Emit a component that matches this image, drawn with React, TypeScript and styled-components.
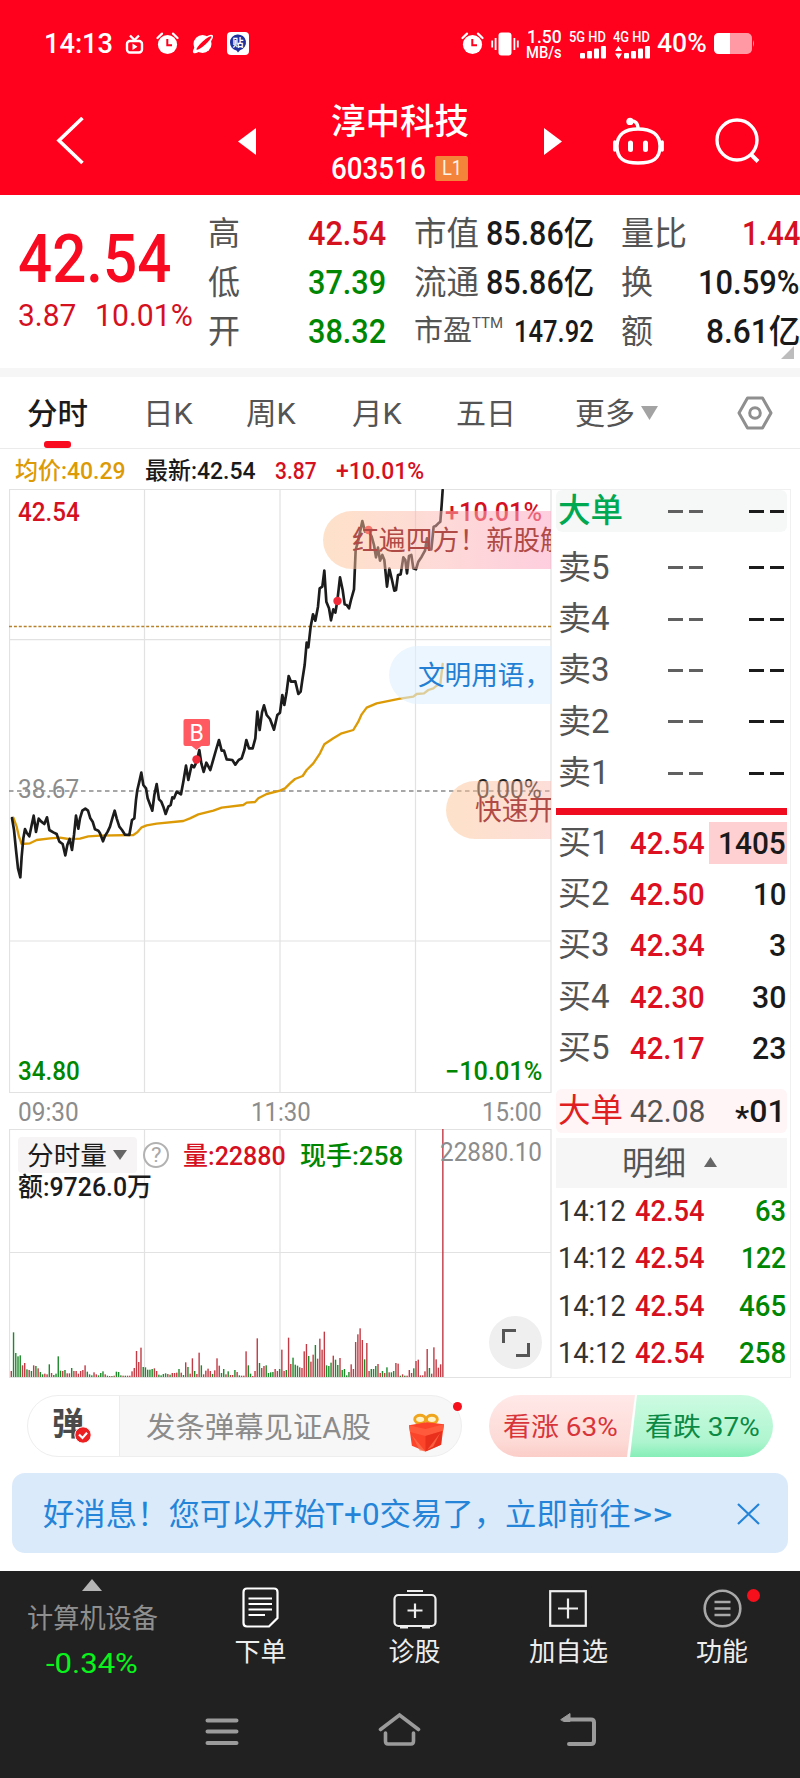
import React, { useLayoutEffect, useRef } from 'react';
import styled, { createGlobalStyle } from 'styled-components';

const GlobalStyle = createGlobalStyle`
  * { box-sizing: border-box; }
  body {
    margin: 0;
    background: #fff;
    font-family: Roboto, "Noto Sans CJK SC", sans-serif;
    color: #1a1a1a;
  }
  svg { display: block; }
`;

const RED = '#d5101f';
const GREEN = '#008600';
const DARK = '#1b1b1b';
const GREY = '#545454';
const MUTED = '#8c8c8c';

/* ---------- text fitted to a column width ---------- */

const TextBox = styled.span<{ $w: number; $size: number; $color?: string; $weight?: number }>`
  display: flex;
  flex: none;
  width: ${p => p.$w}px;
  height: ${p => Math.round(p.$size * 1.2)}px;
  line-height: ${p => Math.round(p.$size * 1.2)}px;
  font-size: ${p => p.$size}px;
  font-weight: ${p => p.$weight ?? 400};
  color: ${p => p.$color ?? 'inherit'};
`;

const TextInner = styled.span`
  flex: none;
  white-space: pre;
  transform-origin: 0 50%;
`;

type FitProps = { w: number; size: number; color?: string; weight?: number; children: React.ReactNode };

function Fit({ w, size, color, weight, children }: FitProps) {
  const ref = useRef<HTMLSpanElement>(null);
  useLayoutEffect(() => {
    const node = ref.current;
    if (node && node.offsetWidth) node.style.transform = `scaleX(${w / node.offsetWidth})`;
  }, [w, size, children]);
  return (
    <TextBox $w={w} $size={size} $color={color} $weight={weight}>
      <TextInner ref={ref}>{children}</TextInner>
    </TextBox>
  );
}

/* ---------- header ---------- */

const Phone = styled.div`
  width: 800px;
  height: 1778px;
  overflow: hidden;
  display: flex;
  flex-direction: column;
  background: #fff;
`;

const Header = styled.header`
  height: 195px;
  flex: none;
  background: #ff001d;
  color: #fff;
`;

const StatusBar = styled.div`
  height: 87px;
  padding: 0 45px 0 44px;
  display: flex;
  align-items: center;
  justify-content: space-between;
`;

const StatusGroup = styled.div<{ $gap: number }>`
  display: flex;
  align-items: center;
  gap: ${p => p.$gap}px;
`;

const Stack = styled.div<{ $gap?: number; $align?: string }>`
  display: flex;
  flex-direction: column;
  align-items: ${p => p.$align ?? 'flex-start'};
  gap: ${p => p.$gap ?? 0}px;
`;

const SpeedUnit = styled.div`
  margin-top: -5px;
`;

const NavBar = styled.div`
  height: 108px;
  display: grid;
  grid-template-columns: 56px 182px 81px 161px 63px 69px 103px 85px;
  align-items: center;
`;

const Title = styled.div`
  display: flex;
  flex-direction: column;
  align-items: center;
  padding: 7px 0 0;
  gap: 6px;
`;

const CodeRow = styled.div`
  display: flex;
  align-items: center;
  gap: 9px;
`;

const Level = styled.span`
  width: 33px;
  height: 25px;
  border-radius: 2px;
  background: #f4843a;
  display: flex;
  align-items: center;
  justify-content: center;
`;

/* ---------- quote ---------- */

const Quote = styled.section`
  height: 173px;
  flex: none;
  display: flex;
  padding-left: 18px;
  position: relative;
`;

const PriceBlock = styled.div`
  width: 190px;
  padding-top: 25px;
`;

const BigPrice = styled.div`
  height: 78px;
  display: flex;
  align-items: center;
`;

const ChangeRow = styled.div`
  display: flex;
  gap: 19px;
  height: 34px;
  align-items: center;
`;

const Column = styled.div<{ $w: number; $ml?: number }>`
  width: ${p => p.$w}px;
  margin-left: ${p => p.$ml ?? 0}px;
  padding-top: 14px;
  flex: none;
`;

const Pair = styled.div`
  height: 49px;
  display: flex;
  align-items: center;
  justify-content: space-between;
`;

const Label = styled.span`
  display: flex;
`;

const Corner = styled.svg`
  position: absolute;
  right: 6px;
  bottom: 9px;
`;

const Divider = styled.div`
  height: 9px;
  flex: none;
  background: #f6f6f6;
`;

/* ---------- tabs ---------- */

const Tabs = styled.nav`
  height: 72px;
  flex: none;
  display: grid;
  grid-template-columns: 27px 116px 103px 106px 104px 119px 66px 96px 63px;
  align-items: center;
  padding-top: 2px;
  border-bottom: 1px solid #ebebeb;
  position: relative;
`;

const Indicator = styled.i`
  position: absolute;
  left: 44px;
  bottom: 0;
  width: 27px;
  height: 7px;
  border-radius: 3px;
  background: #f90a1f;
`;

const Summary = styled.div`
  height: 40px;
  flex: none;
  display: flex;
  align-items: center;
  gap: 19px;
  padding: 5px 0 0 15px;
`;

/* ---------- charts ---------- */

const Main = styled.main`
  height: 889px;
  flex: none;
  display: flex;
  padding-left: 9px;
`;

const Charts = styled.div`
  width: 543px;
  flex: none;
`;

const Pane = styled.div<{ $h: number }>`
  position: relative;
  height: ${p => p.$h}px;
  overflow: hidden;
`;

const Tag = styled.div<{ $y: number; $left?: number; $right?: number }>`
  position: absolute;
  top: ${p => p.$y}px;
  transform: translateY(-50%);
  ${p => (p.$left !== undefined ? `left: ${p.$left}px;` : '')}
  ${p => (p.$right !== undefined ? `right: ${p.$right}px;` : '')}
`;

const Bullet = styled.div<{ $x: number; $y: number; $bg: string; $pad: number }>`
  position: absolute;
  left: ${p => p.$x}px;
  right: 1px;
  top: ${p => p.$y}px;
  height: 58px;
  padding: 2px 0 0 ${p => p.$pad}px;
  border-radius: 29px 0 0 29px;
  background: ${p => p.$bg};
  display: flex;
  align-items: center;
  overflow: hidden;
`;

const TimeAxis = styled.div`
  height: 36px;
  display: flex;
  align-items: center;
  justify-content: space-between;
  padding: 2px 10px 0 9px;
`;

const VolumeHead = styled.div`
  position: absolute;
  left: 9px;
  top: 8px;
  display: flex;
  align-items: center;
`;

const HeadTexts = styled.div`
  display: flex;
  gap: 14px;
  padding-top: 2px;
`;

const Chip = styled.div`
  width: 119px;
  height: 36px;
  padding: 2px 10px 0 9px;
  border-radius: 4px;
  background: #f6f4f5;
  display: flex;
  align-items: center;
  justify-content: space-between;
  margin-right: 6px;
`;

const Help = styled.div`
  width: 26px;
  height: 26px;
  border: 2px solid #b2b2b2;
  border-radius: 50%;
  display: flex;
  align-items: center;
  justify-content: center;
  margin-right: 14px;
`;

const Expand = styled.div`
  position: absolute;
  left: 480px;
  bottom: 9px;
  width: 53px;
  height: 53px;
  border-radius: 50%;
  background: #efefef;
  display: flex;
  align-items: center;
  justify-content: center;
`;

/* ---------- order book ---------- */

const Book = styled.aside`
  width: 239px;
  flex: none;
  padding: 0 3px 0 4px;
  border: 1px solid #f0f0f0;
  border-left: 0;
`;

const BookRow = styled.div<{ $h: number; $bg?: string }>`
  height: ${p => p.$h}px;
  padding: 0 2px;
  border-radius: 6px;
  background: ${p => p.$bg ?? 'transparent'};
  display: grid;
  grid-template-columns: 72px 78px 1fr;
  align-items: center;
`;

const Right = styled.div<{ $bg?: string }>`
  display: flex;
  justify-content: flex-end;
  align-items: center;
  height: 42px;
  margin: 0 -2px 0 1px;
  padding-right: 1px;
  background: ${p => p.$bg ?? 'transparent'};
`;

const Dash = styled.span<{ $c: string; $ml?: number; $mr?: number }>`
  display: flex;
  gap: 6px;
  margin-left: ${p => p.$ml ?? 0}px;
  margin-right: ${p => p.$mr ?? 0}px;
  &::before, &::after {
    content: '';
    width: 14.5px;
    height: 3px;
    background: ${p => p.$c};
  }
`;

const Star = styled.span`
  position: relative;
  top: 6px;
`;

const Spread = styled.div`
  height: 7px;
  margin: 9px 0 2px;
  background: #f00c20;
`;

const Spacer = styled.div<{ $h: number }>`
  height: ${p => p.$h}px;
`;

const DetailBar = styled.div`
  height: 50px;
  margin: 5px 0 -1px;
  background: #f6f6f6;
  display: flex;
  align-items: center;
  justify-content: center;
  gap: 18px;
  padding: 3px 4px 0 0;
`;

const TickRow = styled.div`
  height: 47.5px;
  padding: 0 2px;
  display: grid;
  grid-template-columns: 77px 72px 1fr;
  align-items: center;
`;

/* ---------- lower area ---------- */

const Actions = styled.div`
  height: 62px;
  margin: 17px 0 16px 27px;
  flex: none;
  display: flex;
  gap: 27px;
`;

const Composer = styled.div`
  width: 435px;
  height: 62px;
  border: 1px solid #eee;
  border-radius: 31px;
  background: linear-gradient(90deg, #fff 91px, #ececec 91px, #ececec 92px, #f7f7f7 92px);
  display: flex;
  align-items: center;
  position: relative;
`;

const DanmakuIcon = styled.div`
  width: 118px;
  padding: 0 0 5px 24px;
  position: relative;
`;

const Placeholder = styled.div`
  padding-top: 4px;
`;

const Check = styled.svg`
  position: absolute;
  left: 46px;
  top: 21px;
`;

const GiftSlot = styled.div`
  margin-left: 37px;
  padding-top: 13px;
`;

const RedDot = styled.i<{ $x: number; $y: number; $d: number }>`
  position: absolute;
  left: ${p => p.$x}px;
  top: ${p => p.$y}px;
  width: ${p => p.$d}px;
  height: ${p => p.$d}px;
  border-radius: 50%;
  background: #f5101c;
`;

const Vote = styled.div`
  display: flex;
  width: 284px;
  height: 62px;
  border-radius: 31px;
  overflow: hidden;
`;

const Side = styled.div<{ $w: number; $bg: string; $pad: number; $clip: string; $ml?: number }>`
  width: ${p => p.$w}px;
  margin-left: ${p => p.$ml ?? 0}px;
  background: ${p => p.$bg};
  clip-path: ${p => p.$clip};
  padding: 2px 0 0 ${p => p.$pad}px;
  display: flex;
  align-items: center;
  flex: none;
`;

const Banner = styled.div`
  height: 80px;
  flex: none;
  margin: 0 12px 18px;
  padding: 3px 28px 0 31px;
  border-radius: 13px;
  background: #dbeafb;
  display: flex;
  align-items: center;
  justify-content: space-between;
`;

const BannerText = styled.div`
  display: flex;
  gap: 1px;
`;

const Footer = styled.footer`
  flex: 1;
  background: #212121;
`;

const Menu = styled.div`
  height: 117px;
  display: grid;
  grid-template-columns: 184px 153px 155px 152px 156px;
`;

const MenuItem = styled.div<{ $pad: number; $gap: number }>`
  display: flex;
  flex-direction: column;
  align-items: center;
  padding-top: ${p => p.$pad}px;
  gap: ${p => p.$gap}px;
  position: relative;
`;

const SystemBar = styled.div`
  height: 90px;
  padding: 24px 204px 0 205px;
  display: flex;
  justify-content: space-between;
  align-items: flex-start;
`;

/* ---------- data ---------- */

const PRICE =
  '36,1014 42,1050 48,1110 54,1165 61,1192 65,1130 70,1075 75,1047 80,1058 88,1069 94,1040 101,1007 108,1056 116,1016 124,1025 133,1032 141,1012 148,1050 160,1057 170,1062 178,1085 188,1092 196,1126 202,1095 209,1077 216,1110 222,1065 228,1007 235,1046 240,1015 247,992 256,986 264,992 271,1015 278,1025 285,1048 295,1052 300,1060 309,1084 315,1068 323,1055 330,1040 337,1015 344,992 350,1015 358,1040 366,1050 375,1064 388,1065 396,1020 403,1015 408,960 412,930 418,905 424,878 430,915 438,925 443,955 457,992 463,945 470,912 477,958 484,965 490,980 497,1002 505,980 512,975 517,952 522,955 530,935 543,943 550,905 558,857 565,900 575,855 582,862 590,845 598,810 604,850 611,876 619,848 631,870 640,838 648,810 657,780 665,812 672,812 680,838 697,840 706,854 716,840 725,835 733,810 739,780 747,805 758,805 766,775 772,695 779,750 786,697 792,676 800,705 810,717 822,749 832,705 840,698 847,645 853,675 860,635 866,588 873,605 886,604 895,642 902,635 907,600 914,555 920,488 925,502 932,440 939,403 946,422 954,380 959,325 967,320 973,272 979,365 987,385 993,421 1000,388 1006,398 1012,363 1020,292 1028,330 1034,373 1040,375 1047,385 1053,360 1062,328 1067,210 1074,185 1087,123 1095,155 1105,150 1115,170 1122,195 1128,232 1134,203 1140,242 1147,225 1153,240 1161,320 1168,266 1176,300 1183,332 1188,330 1194,285 1202,283 1210,232 1216,240 1221,280 1227,228 1234,225 1240,265 1248,268 1255,245 1265,230 1275,212 1281,175 1287,208 1294,208 1301,140 1307,138 1315,130 1321,125 1325,75 1328,30';

const AVERAGE =
  '40,1013 50,1040 57,1070 65,1092 90,1090 110,1080 150,1075 180,1073 205,1077 240,1076 265,1069 300,1067 400,1065 412,1057 425,1042 440,1036 470,1031 550,1023 570,1015 595,1003 640,992 665,983 730,975 740,968 765,966 775,955 800,942 840,932 855,925 870,910 885,897 908,888 920,870 940,850 960,820 973,793 1000,775 1025,760 1060,750 1075,725 1085,703 1100,683 1130,670 1200,656 1240,650 1250,642 1272,640 1285,630 1300,625 1310,617 1321,612 1328,552';

const VOLUME =
  '18r 134g 72g 62g 65g 35r 42r 23g 21r 18g 35r 33g 26r 15g 8g 10r 8r 38g 12r 6g 10g 62g 19g 18r 21g 11r 11r 27g 18r 18r 10r 18r 21r 35r 16g 8g 5g 14r 8r 5g 12g 17g 8r 4g 3r 3g 4r 16g 15g 5g 4r 4g 4r 4r 17r 27r 78r 45r 88r 30g 29g 22g 22g 24g 26r 18r 7g 5g 9g 11g 9r 7g 12r 12r 13r 24g 13r 6g 44r 30g 10r 56r 18g 9r 73r 35g 8r 19r 25r 18r 9g 20r 56r 34r 12g 24g 8r 17g 6r 6r 21g 15r 5g 4r 4r 77r 35g 10g 3r 18r 116r 42g 27r 33r 35g 12g 14g 15g 24r 18r 24g 82r 18r 21g 118r 39r 58g 37g 34g 29r 27r 77r 99r 63g 46r 67r 96g 55r 115r 82r 136r 35g 33g 43g 64r 52g 36g 57r 21g 24g 5g 15g 38r 24r 105r 128r 146r 111r 53g 102r 18r 24g 24g 33g 39r 12r 18g 12r 29g 14r 14g 18g 42r 40r 4g 8r 4g 4r 21r 12r 26g 48r 52r 5r 5r 17r 84r 27g 10r 89r 53r 28r 38r 747r'
    .split(' ')
    .map(s => ({ h: parseInt(s, 10) / 3, up: s.endsWith('r') }));

const SELLS = ['卖5', '卖4', '卖3', '卖2', '卖1'];
const BUYS: [string, string, string, number][] = [
  ['买1', '42.54', '1405', 68],
  ['买2', '42.50', '10', 33],
  ['买3', '42.34', '3', 17],
  ['买4', '42.30', '30', 34],
  ['买5', '42.17', '23', 34],
];
const TICKS: [string, number][] = [['63', 31], ['122', 45], ['465', 47], ['258', 47]];

/* ---------- icons ---------- */

const AlarmIcon = () => (
  <svg width="23" height="23" viewBox="0 0 23 23" fill="none">
    <circle cx="11.5" cy="12.5" r="9.6" fill="#fff" />
    <path d="M1.5 6 L6 1.6 M21.5 6 L17 1.6" stroke="#fff" strokeWidth="2.2" strokeLinecap="round" />
    <path d="M11.3 7 V13.2 H16" stroke="#ff001d" strokeWidth="2" />
  </svg>
);

const Signal = ({ arrows }: { arrows?: boolean }) => (
  <svg width={arrows ? 35 : 27} height="13" viewBox={arrows ? '0 0 35 13' : '8 0 27 13'} fill="#fff">
    {arrows && <path d="M3.5 0 L7 5 H0 Z M3.5 13 L7 7.6 H0 Z" />}
    <rect x="9" y="7" width="5" height="5.5" rx="1" />
    <rect x="16" y="5" width="5" height="7.5" rx="1" />
    <rect x="23" y="2.5" width="5" height="10" rx="1" />
    <rect x="30" y="0" width="5" height="12.5" rx="1" />
  </svg>
);

function StatusIcons() {
  return (
    <StatusBar>
      <StatusGroup $gap={12}>
        <Fit w={69} size={28} weight={500}>14:13</Fit>
        <svg width="19" height="20" viewBox="0 0 19 20" fill="none" stroke="#fff" strokeWidth="2.4">
          <rect x="2" y="7" width="15" height="11.5" rx="3" />
          <path d="M5 1.5 L9.5 6 L14 1.5" />
          <path d="M7.5 9.5 L12.5 12.8 L7.5 16 Z" fill="#fff" stroke="none" />
        </svg>
        <AlarmIcon />
        <svg width="24" height="22" viewBox="0 0 24 22" fill="none">
          <circle cx="11.5" cy="11" r="9" fill="#fff" />
          <ellipse cx="12" cy="11" rx="13" ry="4.2" transform="rotate(-42 12 11)" fill="#fff" />
          <ellipse cx="13" cy="10" rx="10" ry="2" transform="rotate(-42 13 10)" fill="#ff001d" />
        </svg>
        <svg width="22" height="23" viewBox="0 0 22 23">
          <rect width="22" height="23" rx="4" fill="#fff" />
          <path d="M3 10.5 A8 8 0 1 1 13 18.2 L11 20.5 L9.5 18.5 A8 8 0 0 1 3 10.5" fill="#20309c" />
          <text x="11" y="14.7" fontSize="11" fontWeight="700" fill="#fff" textAnchor="middle" fontFamily="Noto Sans CJK SC, sans-serif">贴</text>
        </svg>
      </StatusGroup>
      <StatusGroup $gap={7}>
        <AlarmIcon />
        <svg width="28" height="24" viewBox="0 0 28 24" fill="none" stroke="#fff" strokeWidth="1.8">
          <rect x="7.5" y="0.5" width="13" height="23" rx="3" fill="#fff" stroke="none" />
          <path d="M4.6 6 V18 M1.2 8.5 V15.5 M23.4 6 V18 M26.8 8.5 V15.5" />
        </svg>
        <Stack $align="center">
          <Fit w={35} size={18} weight={500}>1.50</Fit>
          <SpeedUnit><Fit w={36} size={16} weight={500}>MB/s</Fit></SpeedUnit>
        </Stack>
        <Stack $align="flex-end" $gap={0}>
          <Fit w={37} size={15} weight={500}>5G HD</Fit>
          <Signal />
        </Stack>
        <Stack $align="flex-end" $gap={0}>
          <Fit w={37} size={15} weight={500}>4G HD</Fit>
          <Signal arrows />
        </Stack>
        <Fit w={50} size={26} weight={500}>40%</Fit>
        <svg width="41" height="21" viewBox="0 0 41 21">
          <rect width="38" height="21" rx="5" fill="#ff9aa4" />
          <path d="M5 0 H16 V21 H5 Q0 21 0 16 V5 Q0 0 5 0" fill="#fff" />
          <path d="M39 7 Q41 10.5 39 14 Z" fill="#ff9aa4" />
        </svg>
      </StatusGroup>
    </StatusBar>
  );
}

function TopNav() {
  return (
    <NavBar>
      <span />
      <svg width="28" height="49" viewBox="0 1 28 49" fill="none" stroke="#fff" strokeWidth="3.6">
        <path d="M26.5 2 L3 24.5 L26.5 47" />
      </svg>
      <svg width="18" height="28" viewBox="0 0 18 28"><path d="M18 1 V28 L0 14.5 Z" fill="#fff" /></svg>
      <Title>
        <Fit w={138} size={35} weight={500}>淳中科技</Fit>
        <CodeRow>
          <Fit w={95} size={31} weight={500}>603516</Fit>
          <Level><Fit w={20} size={21} color="#fff3e8">L1</Fit></Level>
        </CodeRow>
      </Title>
      <svg width="82" height="28" viewBox="0 0 82 28"><path d="M64 1 V28 L82 14.5 Z" fill="#fff" /></svg>
      <span />
      <svg width="54" height="50" viewBox="0 0 54 50" fill="none" stroke="#fff" strokeWidth="3.4">
        <path d="M26 13 C39 13 48 18 48 30 C48 43 41 47 26 47 C12 47 5 43 5 30 C5 18 13 13 26 13 Z" />
        <path d="M18 5 Q26 4 26 13" />
        <circle cx="18" cy="5.4" r="2" fill="#fff" />
        <path d="M2.8 26 V34 M50.2 26 V34" strokeLinecap="round" />
        <path d="M18.5 27 V33.5 M33.5 27 V33.5" strokeWidth="5" strokeLinecap="round" />
      </svg>
      <svg width="46" height="46" viewBox="0 0 46 46" fill="none" stroke="#fff" strokeWidth="3.4">
        <circle cx="22" cy="22" r="20" />
        <path d="M35.5 36 L43 43.5" strokeWidth="4" />
      </svg>
    </NavBar>
  );
}

function QuotePanel() {
  return (
    <Quote>
      <PriceBlock>
        <BigPrice><Fit w={153} size={66} weight={500} color="#f80b20">42.54</Fit></BigPrice>
        <ChangeRow>
          <Fit w={58} size={32} color={RED}>3.87</Fit>
          <Fit w={98} size={32} color={RED}>10.01%</Fit>
        </ChangeRow>
      </PriceBlock>
      <Column $w={178}>
        {([['高', '42.54', RED], ['低', '37.39', GREEN], ['开', '38.32', GREEN]] as const).map(([k, v, c]) => (
          <Pair key={k}><Fit w={32} size={33} color={GREY}>{k}</Fit><Fit w={78} size={33} weight={500} color={c}>{v}</Fit></Pair>
        ))}
      </Column>
      <Column $w={180} $ml={28}>
        {['市值', '流通'].map(k => (
          <Pair key={k}><Fit w={65} size={33} color={GREY}>{k}</Fit><Fit w={108} size={33} weight={500}>85.86亿</Fit></Pair>
        ))}
        <Pair>
          <Label>
            <Fit w={58} size={29} color={GREY}>市盈</Fit>
            <Fit w={31} size={15} color={GREY}>TTM</Fit>
          </Label>
          <Fit w={80} size={31} weight={500}>147.92</Fit>
        </Pair>
      </Column>
      <Column $w={179} $ml={27}>
        <Pair><Fit w={66} size={33} color={GREY}>量比</Fit><Fit w={58} size={33} weight={500} color={RED}>1.44</Fit></Pair>
        <Pair><Fit w={32} size={33} color={GREY}>换</Fit><Fit w={102} size={33} weight={500}>10.59%</Fit></Pair>
        <Pair><Fit w={32} size={33} color={GREY}>额</Fit><Fit w={94} size={33} weight={500}>8.61亿</Fit></Pair>
      </Column>
      <Corner width="13" height="13" viewBox="0 0 13 13"><path d="M13 0 V13 H0 Z" fill="#bdbdbd" /></Corner>
    </Quote>
  );
}

function TabBar() {
  return (
    <Tabs>
      <span />
      <Fit w={61} size={30} weight={500} color={DARK}>分时</Fit>
      <Fit w={50} size={30} color={GREY}>日K</Fit>
      <Fit w={50} size={30} color={GREY}>周K</Fit>
      <Fit w={50} size={30} color={GREY}>月K</Fit>
      <Fit w={60} size={30} color={GREY}>五日</Fit>
      <Fit w={60} size={30} color={GREY}>更多</Fit>
      <svg width="17" height="16" viewBox="0 0 17 16"><path d="M0 0 H17 L8.5 14 Z" fill="#a3a3a3" /></svg>
      <svg width="36" height="36" viewBox="0 0 36 36" fill="none" stroke="#8f8f8f" strokeWidth="3" strokeLinejoin="round">
        <path d="M10.5 2 H25.5 L34 17 L25.5 32 H10.5 L2 17 Z" />
        <circle cx="18" cy="17" r="5.3" />
      </svg>
      <Indicator />
    </Tabs>
  );
}

function PricePane() {
  return (
    <Pane $h={604}>
      <svg width="543" height="604" viewBox="9 489 543 604" fill="none">
        <path d="M9.5 489.5 H551 V1092.5 H9.5 Z M144.5 489 V1092 M280 489 V1092 M415.5 489 V1092 M9 639.7 H551 M9 941 H551" stroke="#e2e2e2" strokeWidth="1.2" />
        <path d="M9 626.5 H551" stroke="#b8822c" strokeWidth="1.4" strokeDasharray="3 1.9" />
        <path d="M9 791 H551" stroke="#8a8a8a" strokeWidth="1.4" strokeDasharray="4.5 3.5" />
        <g transform="translate(0 480) scale(0.33333)" strokeLinejoin="round" strokeLinecap="round">
          <polyline points={AVERAGE} stroke="#dc9a06" strokeWidth="7" />
          <polyline points={PRICE} stroke="#1c1c1c" strokeWidth="8" />
        </g>
        <rect x="183.5" y="719" width="26.5" height="27" rx="2" fill="#ff5a62" />
        <path d="M191 745.5 H202 L196.5 750 Z" fill="#ff5a62" />
        <circle cx="196.5" cy="759.5" r="4.2" fill="#f02a38" />
        <circle cx="337.5" cy="601" r="4.2" fill="#f02a38" />
        <circle cx="368.5" cy="530" r="4.2" fill="#f02a38" />
        <text x="196.7" y="740.5" fill="#fff" fontSize="23" textAnchor="middle" fontFamily="Roboto, sans-serif">B</text>
      </svg>
      <Tag $y={24} $left={9}><Fit w={62} size={25} weight={500} color={RED}>42.54</Fit></Tag>
      <Tag $y={24} $right={10}><Fit w={97} size={25} weight={500} color={RED}>+10.01%</Fit></Tag>
      <Tag $y={300} $left={9}><Fit w={61} size={26} color={MUTED}>38.67</Fit></Tag>
      <Tag $y={300} $right={10}><Fit w={66} size={26} color="#222">0.00%</Fit></Tag>
      <Tag $y={583} $left={9}><Fit w={62} size={25} weight={500} color={GREEN}>34.80</Fit></Tag>
      <Tag $y={583} $right={10}><Fit w={97} size={25} weight={500} color={GREEN}>−10.01%</Fit></Tag>
      <Bullet $x={314} $y={22} $pad={29} $bg="linear-gradient(90deg, rgba(253,196,148,.5), rgba(252,182,176,.5) 50%, rgba(253,166,196,.55))">
        <Fit w={215} size={27} color="#b04a46">红遍四方！新股解</Fit>
      </Bullet>
      <Bullet $x={380} $y={157} $pad={29} $bg="rgba(222,240,253,.6)">
        <Fit w={133} size={27} color="#237fd3">文明用语，</Fit>
      </Bullet>
      <Bullet $x={437} $y={292} $pad={29} $bg="linear-gradient(90deg, rgba(253,196,148,.5), rgba(252,182,170,.45))">
        <Fit w={80} size={27} color="#b04a46">快速开</Fit>
      </Bullet>
    </Pane>
  );
}

function VolumePane() {
  return (
    <Pane $h={249}>
      <svg width="543" height="249" viewBox="9 1129 543 249" fill="none">
        <path d="M9.5 1129.5 H551 V1377.5 H9.5 Z M144.5 1129 V1377 M280 1129 V1377 M415.5 1129 V1377 M9 1252.5 H551" stroke="#e2e2e2" strokeWidth="1.2" />
        {VOLUME.map((b, i) => (
          <rect key={i} x={10.6 + i * 2.236} y={1377 - b.h} width="1.4" height={b.h} fill={b.up ? '#c23a44' : '#1d8a2a'} />
        ))}
      </svg>
      <VolumeHead>
        <Chip>
          <Fit w={80} size={26} color={DARK}>分时量</Fit>
          <svg width="14" height="12" viewBox="0 0 14 12"><path d="M0 0 H14 L7 10 Z" fill="#666" /></svg>
        </Chip>
        <Help><Fit w={10} size={20} color="#a8a8a8">?</Fit></Help>
        <HeadTexts>
          <Fit w={103} size={26} weight={500} color={RED}>量:22880</Fit>
          <Fit w={103} size={26} weight={500} color={GREEN}>现手:258</Fit>
        </HeadTexts>
      </VolumeHead>
      <Tag $y={58} $left={9}><Fit w={134} size={26} weight={500} color={DARK}>额:9726.0万</Fit></Tag>
      <Tag $y={24} $right={10}><Fit w={102} size={25} color={MUTED}>22880.10</Fit></Tag>
      <Expand>
        <svg width="28" height="28" viewBox="0 0 28 28" fill="none" stroke="#555" strokeWidth="3">
          <path d="M1.5 14 V1.5 H14 M14 26.5 H26.5 V14" />
        </svg>
      </Expand>
    </Pane>
  );
}

function OrderBook() {
  return (
    <Book>
      <BookRow $h={42} $bg="#f6f8f8">
        <Fit w={65} size={33} color="#00a852" weight={500}>大单</Fit>
        <Dash $c="#606060" $ml={38} />
        <Right><Dash $c={DARK} $mr={2} /></Right>
      </BookRow>
      <Spacer $h={10} />
      {SELLS.map(s => (
        <BookRow key={s} $h={51.4}>
          <Fit w={52} size={33} color={GREY}>{s}</Fit>
          <Dash $c="#606060" $ml={38} />
          <Right><Dash $c={DARK} $mr={2} /></Right>
        </BookRow>
      ))}
      <Spread />
      {BUYS.map(([name, price, qty, w], i) => (
        <BookRow key={name} $h={51.4}>
          <Fit w={52} size={33} color={GREY}>{name}</Fit>
          <Fit w={75} size={32} weight={500} color="#dc1020">{price}</Fit>
          <Right $bg={i === 0 ? '#ffd0d2' : undefined}><Fit w={w} size={32} weight={500}>{qty}</Fit></Right>
        </BookRow>
      ))}
      <Spacer $h={15} />
      <BookRow $h={44} $bg="#fff4f6">
        <Fit w={65} size={33} color="#e02020">大单</Fit>
        <Fit w={75} size={32} color={GREY}>42.08</Fit>
        <Right><Fit w={51} size={32} weight={500}><Star>*</Star>01</Fit></Right>
      </BookRow>
      <DetailBar>
        <Fit w={64} size={33} color={GREY}>明细</Fit>
        <svg width="13" height="14" viewBox="0 0 13 14"><path d="M0 10 H13 L6.5 0 Z" fill="#666" /></svg>
      </DetailBar>
      {TICKS.map(([qty, w]) => (
        <TickRow key={qty}>
          <Fit w={68} size={30} color="#333">14:12</Fit>
          <Fit w={70} size={30} weight={500} color={RED}>42.54</Fit>
          <Right><Fit w={w} size={30} weight={500} color={GREEN}>{qty}</Fit></Right>
        </TickRow>
      ))}
    </Book>
  );
}

const Gift = () => (
  <svg width="37" height="39" viewBox="0 0 38 39">
    <ellipse cx="12.5" cy="6" rx="5.6" ry="4.2" fill="#fff3c8" stroke="#f0a51e" strokeWidth="3" />
    <ellipse cx="24.5" cy="6" rx="5.6" ry="4.2" fill="#fff3c8" stroke="#f0a51e" strokeWidth="3" />
    <path d="M1 12 L19 9 L37 11 L36 18 L34 32 L18 39 L4 33 L2 19 Z" fill="#fb4429" />
    <path d="M1 12 L18 16 L37 11 L36 18 L18 23 L2 19 Z" fill="#ff5a3c" />
    <path d="M18 23 L35 18 L34 32 L18 39 Z" fill="#e9301c" />
    <path d="M4 22 L18 39 L12 38 Z M33 20 L20 37 L26 34 Z" fill="#ff7350" opacity=".7" />
  </svg>
);

export default function App() {
  return (
    <Phone>
      <GlobalStyle />
      <Header>
        <StatusIcons />
        <TopNav />
      </Header>
      <QuotePanel />
      <Divider />
      <TabBar />
      <Summary>
        <Fit w={111} size={24} color="#dc9a06" weight={500}>均价:40.29</Fit>
        <Fit w={111} size={24} weight={500}>最新:42.54</Fit>
        <Fit w={42} size={24} color={RED} weight={500}>3.87</Fit>
        <Fit w={88} size={24} color={RED} weight={500}>+10.01%</Fit>
      </Summary>
      <Main>
        <Charts>
          <PricePane />
          <TimeAxis>
            <Fit w={61} size={26} color={MUTED}>09:30</Fit>
            <Fit w={60} size={26} color={MUTED}>11:30</Fit>
            <Fit w={60} size={26} color={MUTED}>15:00</Fit>
          </TimeAxis>
          <VolumePane />
        </Charts>
        <OrderBook />
      </Main>
      <Actions>
        <Composer>
          <DanmakuIcon>
            <Fit w={32} size={32} weight={700} color="#4a4a4a">弹</Fit>
            <Check width="18" height="18" viewBox="0 0 18 18">
              <circle cx="9" cy="9" r="8.2" fill="#ec2020" stroke="#fff" />
              <path d="M5 8.5 L8.5 12 L13 6.8" fill="none" stroke="#fff" strokeWidth="2.2" />
            </Check>
          </DanmakuIcon>
          <Placeholder><Fit w={225} size={29} color="#8b8b8b">发条弹幕见证A股</Fit></Placeholder>
          <RedDot $x={425} $y={6} $d={9} />
          <GiftSlot><Gift /></GiftSlot>
        </Composer>
        <Vote>
          <Side $w={146} $pad={14} $bg="linear-gradient(#ffe9e8, #fddad6 75%, #fbcdc8)" $clip="polygon(0 0, 100% 0, 138px 100%, 0 100%)">
            <Fit w={115} size={26} color="#d8353a">看涨 63%</Fit>
          </Side>
          <Side $w={143} $ml={-5} $pad={15} $bg="linear-gradient(#cdfbe2, #aef5cf 75%, #86eeb8)" $clip="polygon(7px 0, 100% 0, 100% 100%, 0 100%)">
            <Fit w={115} size={26} color="#0c8a45">看跌 37%</Fit>
          </Side>
        </Vote>
      </Actions>
      <Banner>
        <BannerText>
          <Fit w={588} size={31} color="#2484d8">好消息！您可以开始T+0交易了，立即前往</Fit>
          <Fit w={40} size={31} color="#2484d8">&gt;&gt;</Fit>
        </BannerText>
        <svg width="23" height="24" viewBox="0 0 23 24" fill="none" stroke="#2484d8" strokeWidth="2.2"><path d="M1 1 L22 21 M22 1 L1 21" /></svg>
      </Banner>
      <Footer>
        <Menu>
          <MenuItem $pad={8} $gap={12}>
            <svg width="20" height="12" viewBox="0 0 20 12"><path d="M0 12 H20 L10 0 Z" fill="#b5b5b5" /></svg>
            <Fit w={131} size={27} color="#8f8f8f">计算机设备</Fit>
            <Fit w={92} size={28} color="#08f41c">-0.34%</Fit>
          </MenuItem>
          <MenuItem $pad={16} $gap={9}>
            <svg width="37" height="41" viewBox="0 0 37 41" fill="none" stroke="#fff" strokeWidth="2.2">
              <path d="M5 1.5 H32 Q35.5 1.5 35.5 5 V31 L27 39.5 H5 Q1.5 39.5 1.5 36 V5 Q1.5 1.5 5 1.5 Z" />
              <path d="M6.5 11.5 H30 M6.5 17 H30 M6.5 22.5 H30 M6.5 28 H23" />
            </svg>
            <Fit w={52} size={26} color="#eee">下单</Fit>
          </MenuItem>
          <MenuItem $pad={18} $gap={8}>
            <svg width="44" height="40" viewBox="0 0 44 40" fill="none" stroke="#eee" strokeWidth="2.2">
              <rect x="1.5" y="6" width="41" height="31" rx="4" />
              <path d="M14 2 H30 M22 14.5 V29 M14.5 21.5 H29.5 M7 38.5 H15 M29 38.5 H37" />
            </svg>
            <Fit w={52} size={26} color="#eee">诊股</Fit>
          </MenuItem>
          <MenuItem $pad={19} $gap={10}>
            <svg width="38" height="37" viewBox="0 0 38 37" fill="none" stroke="#eee" strokeWidth="2.2">
              <rect x="1.2" y="1.2" width="35.6" height="34.6" />
              <path d="M19 8.5 V28.5 M9 18.5 H29" />
            </svg>
            <Fit w={79} size={26} color="#eee">加自选</Fit>
          </MenuItem>
          <MenuItem $pad={18} $gap={9}>
            <svg width="39" height="39" viewBox="0 0 39 39" fill="none" stroke="#a9a9a9" strokeWidth="2.6">
              <circle cx="19.5" cy="19.5" r="17.8" />
              <path d="M11.5 13 H27.5 M11.5 19.5 H27.5 M11.5 26 H27.5" />
            </svg>
            <Fit w={52} size={26} color="#eee">功能</Fit>
            <RedDot $x={103} $y={18} $d={13} />
          </MenuItem>
        </Menu>
        <SystemBar>
          <svg width="34" height="36" viewBox="0 0 34 36" stroke="#9b9b9b" strokeWidth="4" strokeLinecap="round"><path d="M2.5 8.5 H31.5 M2.5 19.5 H31.5 M2.5 31 H31.5" /></svg>
          <svg width="43" height="34" viewBox="0 0 43 34" fill="none" stroke="#9b9b9b" strokeWidth="3.6" strokeLinecap="round">
            <path d="M2.5 17.5 L21.5 3 L40.5 17.5" /><path d="M7.5 21 V29 Q7.5 32 10 32 H33 Q35.5 32 35.5 29 V21" />
          </svg>
          <svg width="36" height="34" viewBox="0 0 36 34" fill="none" stroke="#9b9b9b" strokeWidth="4" strokeLinecap="round">
            <path d="M5 7.5 H31 Q34 7.5 34 10.5 V29 Q34 32 31 32 H9" /><path d="M1 7.5 L10 1.5 V9.5 H4 Z" fill="#9b9b9b" strokeWidth="1" />
          </svg>
        </SystemBar>
      </Footer>
    </Phone>
  );
}
